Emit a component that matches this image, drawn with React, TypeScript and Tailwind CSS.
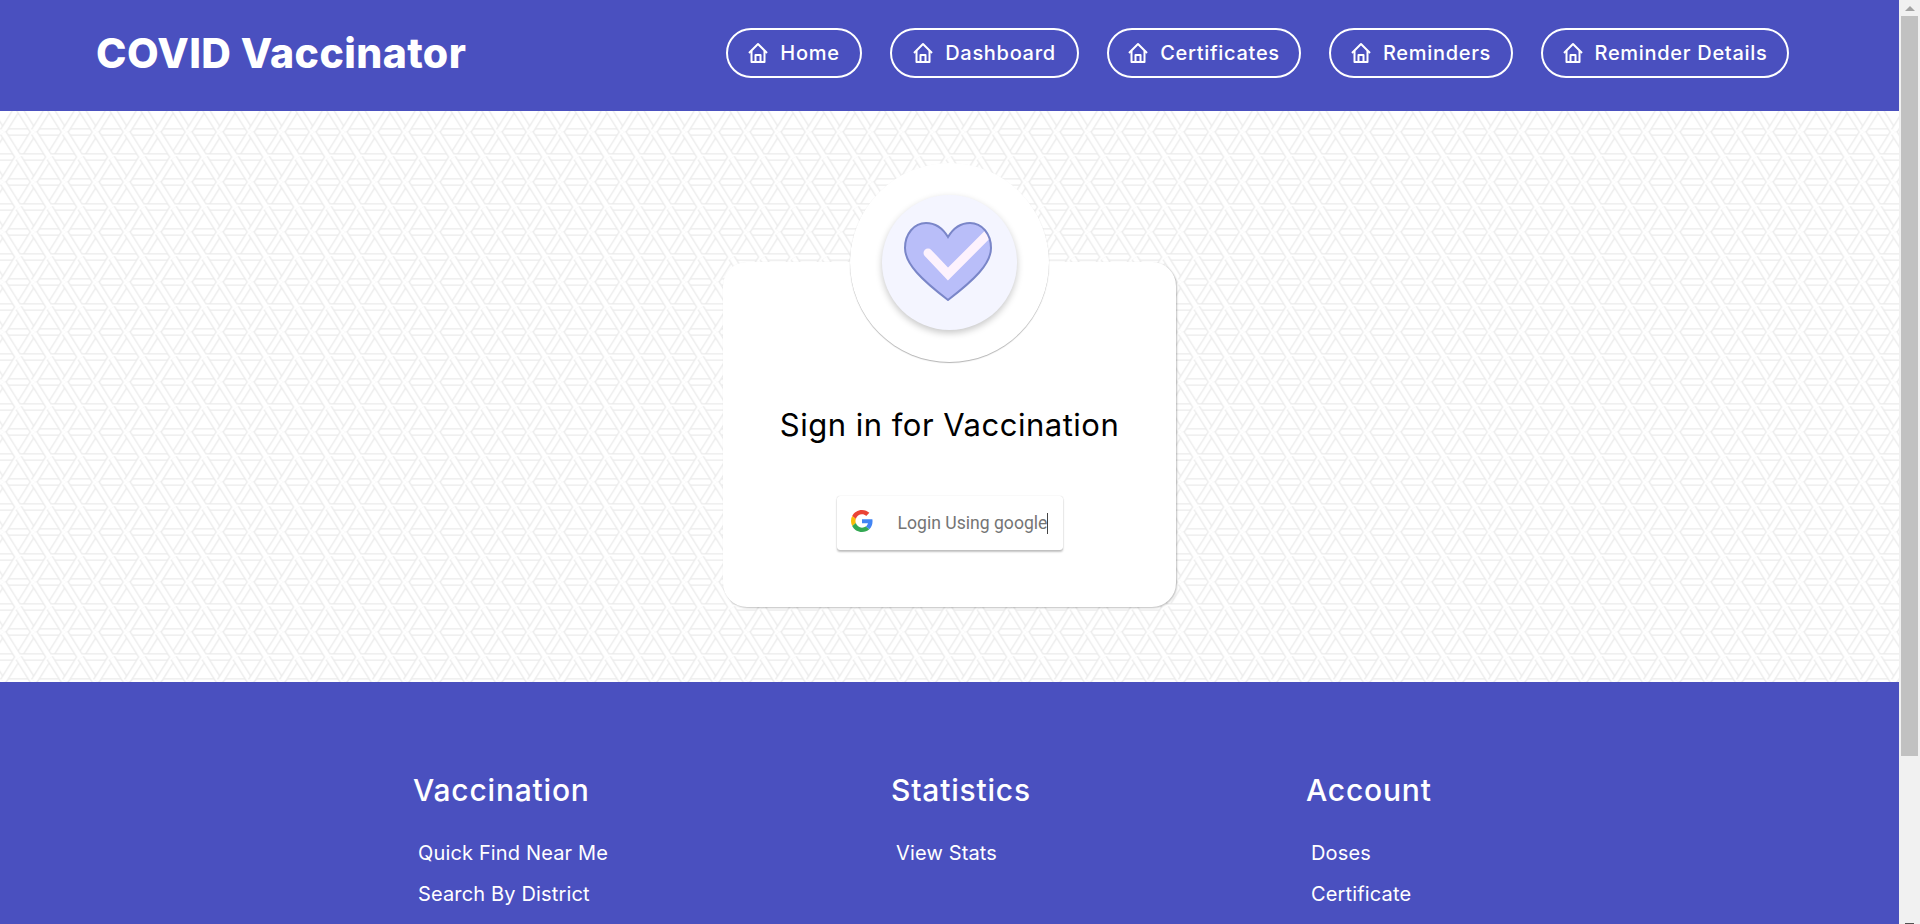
import React from 'react';

const sans = "font-['Inter','Noto_Sans',sans-serif]";

const navItems = [
  { label: 'Home', width: 'w-[136px]' },
  { label: 'Dashboard', width: 'w-[189px]' },
  { label: 'Certificates', width: 'w-[194px]' },
  { label: 'Reminders', width: 'w-[184px]' },
  { label: 'Reminder Details', width: 'w-[248px]' },
];

const footerColumns = [
  { title: 'Vaccination', width: 'w-[478px]', links: ['Quick Find Near Me', 'Search By District'] },
  { title: 'Statistics', width: 'w-[415px]', links: ['View Stats'] },
  { title: 'Account', width: 'w-[300px]', links: ['Doses', 'Certificate'] },
];

const HomeIcon = () => (
  <svg width="20" height="22" viewBox="0 0 20 22" fill="none" stroke="white" strokeWidth="2" strokeLinejoin="round" className="shrink-0">
    <path d="M1 11 10 2l9 9" />
    <path d="M3.5 9v11h13V9" />
    <path d="M7.5 20v-7h5v7" />
  </svg>
);

const GoogleIcon = () => (
  <svg width="22" height="22" viewBox="0 0 48 48" className="shrink-0">
    <path fill="#EA4335" d="M24 9.5c3.54 0 6.71 1.22 9.21 3.6l6.85-6.85C35.9 2.38 30.47 0 24 0 14.62 0 6.51 5.38 2.56 13.22l7.98 6.19C12.43 13.72 17.74 9.5 24 9.5z" />
    <path fill="#4285F4" d="M46.98 24.55c0-1.57-.15-3.09-.38-4.55H24v9.02h12.94c-.58 2.96-2.26 5.48-4.78 7.18l7.73 6c4.51-4.18 7.09-10.36 7.09-17.65z" />
    <path fill="#FBBC05" d="M10.53 28.59c-.48-1.45-.76-2.99-.76-4.59s.27-3.14.76-4.59l-7.98-6.19C.92 16.46 0 20.12 0 24c0 3.88.92 7.54 2.56 10.78l7.97-6.19z" />
    <path fill="#34A853" d="M24 48c6.48 0 11.93-2.13 15.89-5.81l-7.73-6c-2.15 1.45-4.92 2.3-8.16 2.3-6.26 0-11.57-4.22-13.47-9.91l-7.98 6.19C6.51 42.62 14.62 48 24 48z" />
  </svg>
);

const HeartIcon = () => {
  const heart = 'M44 15C38 5 30 1 22 1 10 1 1 12 1 26c0 16 17 32 43 52 26-20 43-36 43-52C87 12 78 1 66 1 58 1 50 5 44 15Z';
  return (
    <svg width="88" height="79" viewBox="0 0 88 79" fill="none">
      <defs>
        <clipPath id="heart-clip">
          <path d={heart} />
        </clipPath>
      </defs>
      <path d={heart} fill="#b9bef9" />
      <path d="M24 31 44 52 86 10" stroke="#fdf2fd" strokeWidth="9" strokeLinecap="round" clipPath="url(#heart-clip)" />
      <path d={heart} stroke="#7a86c8" strokeWidth="2" />
    </svg>
  );
};

// one woven "Y" of the page background
const weave: { x: number; y: number }[] = [];
for (let j = -1; j <= 1; j++) {
  for (let i = -1; i <= 2; i++) {
    weave.push({ x: i * 31, y: j * 50 });
    weave.push({ x: i * 31 + 15.5, y: j * 50 + 25 });
  }
}

const PatternBackground = () => (
  <svg className="absolute inset-0 w-full h-full blur-[0.5px]" aria-hidden="true">
    <defs>
      <pattern id="weave" width="31" height="50" patternUnits="userSpaceOnUse" patternTransform="translate(18.3 46)">
        <rect width="31" height="50" fill="white" />
        {weave.map((p, idx) => {
          const d = `M${p.x} ${p.y}h30M${p.x} ${p.y}l-15 -24M${p.x} ${p.y}l-15 24`;
          return (
            <g key={idx} fill="none">
              <path d={d} stroke="#ebebeb" strokeWidth="7.5" />
              <path d={d} stroke="white" strokeWidth="5" />
            </g>
          );
        })}
      </pattern>
    </defs>
    <rect width="100%" height="100%" fill="url(#weave)" />
  </svg>
);

const Header = () => (
  <header className="relative z-10 h-[111px] bg-[#4a50bf] flex items-center justify-between pl-[96px] pr-[110px] shrink-0">
    <h1 className={`${sans} text-white text-[41px] font-extrabold tracking-[0.4px] mb-[4px]`}>COVID Vaccinator</h1>
    <nav className="flex gap-[28px] mb-[6px]">
      {navItems.map((item) => (
        <a key={item.label} className={`${item.width} h-[50px] border-2 border-white rounded-full flex items-center justify-center gap-3 text-white text-[20px] font-medium tracking-[0.7px] ${sans}`}>
          <HomeIcon />
          <span>{item.label}</span>
        </a>
      ))}
    </nav>
  </header>
);

const SignInCard = () => (
  <section className="relative h-[571px] shrink-0 flex justify-center pt-[151px]">
    <PatternBackground />
    <div className="relative w-[453px] h-[345px] bg-white rounded-3xl shadow-[1px_1px_2px_rgba(0,0,0,0.25)] flex flex-col items-center">
      <div className="absolute top-[-99px] left-[127px] w-[199px] h-[199px] rounded-full bg-white shadow-[0_1px_1px_rgba(0,0,0,0.3)] flex items-center justify-center">
        <div className="w-[135px] h-[135px] rounded-full bg-[#f4f5ff] shadow-[0_3px_7px_rgba(0,0,0,0.22)] flex items-center justify-center pr-[3px] pb-[3px]">
          <HeartIcon />
        </div>
      </div>
      <h2 className={`${sans} text-black text-[31px] font-normal tracking-[0.5px] mt-[141px] leading-[44px]`}>Sign in for Vaccination</h2>
      <button className="mt-[49px] w-[226px] h-[54px] bg-white rounded-[3px] shadow-[0_2px_2px_rgba(0,0,0,0.24),0_0_1px_rgba(0,0,0,0.24)] flex items-center pl-[14px] font-['Roboto',sans-serif] text-[17.6px] font-normal text-[#757575]">
        <span className="mb-[5px]"><GoogleIcon /></span>
        <span className="ml-[25px]">Login Using google</span>
        <span className="w-px h-[21px] bg-[#444] shrink-0" />
      </button>
    </div>
  </section>
);

const Footer = () => (
  <footer className={`${sans} relative z-10 flex-1 bg-[#4a50bf] text-white flex pl-[413px] pt-[88px] overflow-hidden`}>
    {footerColumns.map((col) => (
      <div key={col.title} className={col.width}>
        <h3 className="text-[30px] font-medium tracking-[0.8px] leading-[40px]">{col.title}</h3>
        <ul className="mt-[29px] pl-[5px] flex flex-col gap-[13px] text-[20px] tracking-[0.15px] leading-[28px]">
          {col.links.map((link) => (
            <li key={link}>{link}</li>
          ))}
        </ul>
      </div>
    ))}
  </footer>
);

const Scrollbar = () => (
  <aside className="w-[21px] h-[924px] bg-[#f1f1f1] flex flex-col items-center shrink-0">
    <div className="h-[16px] flex items-center justify-center shrink-0">
      <div className="w-0 h-0 border-x-[5px] border-x-transparent border-b-[5px] border-b-[#a3a3a3]" />
    </div>
    <div className="w-[17px] h-[740px] bg-[#c1c1c1]" />
    <div className="flex-1" />
    <div className="w-[9px] h-px bg-[#505050]" />
  </aside>
);

const App: React.FC = () => {
  return (
    <div className="w-[1920px] h-[924px] flex overflow-hidden bg-white">
      <main className="w-[1899px] h-[924px] flex flex-col">
        <Header />
        <SignInCard />
        <Footer />
      </main>
      <Scrollbar />
    </div>
  );
};

export default App;
